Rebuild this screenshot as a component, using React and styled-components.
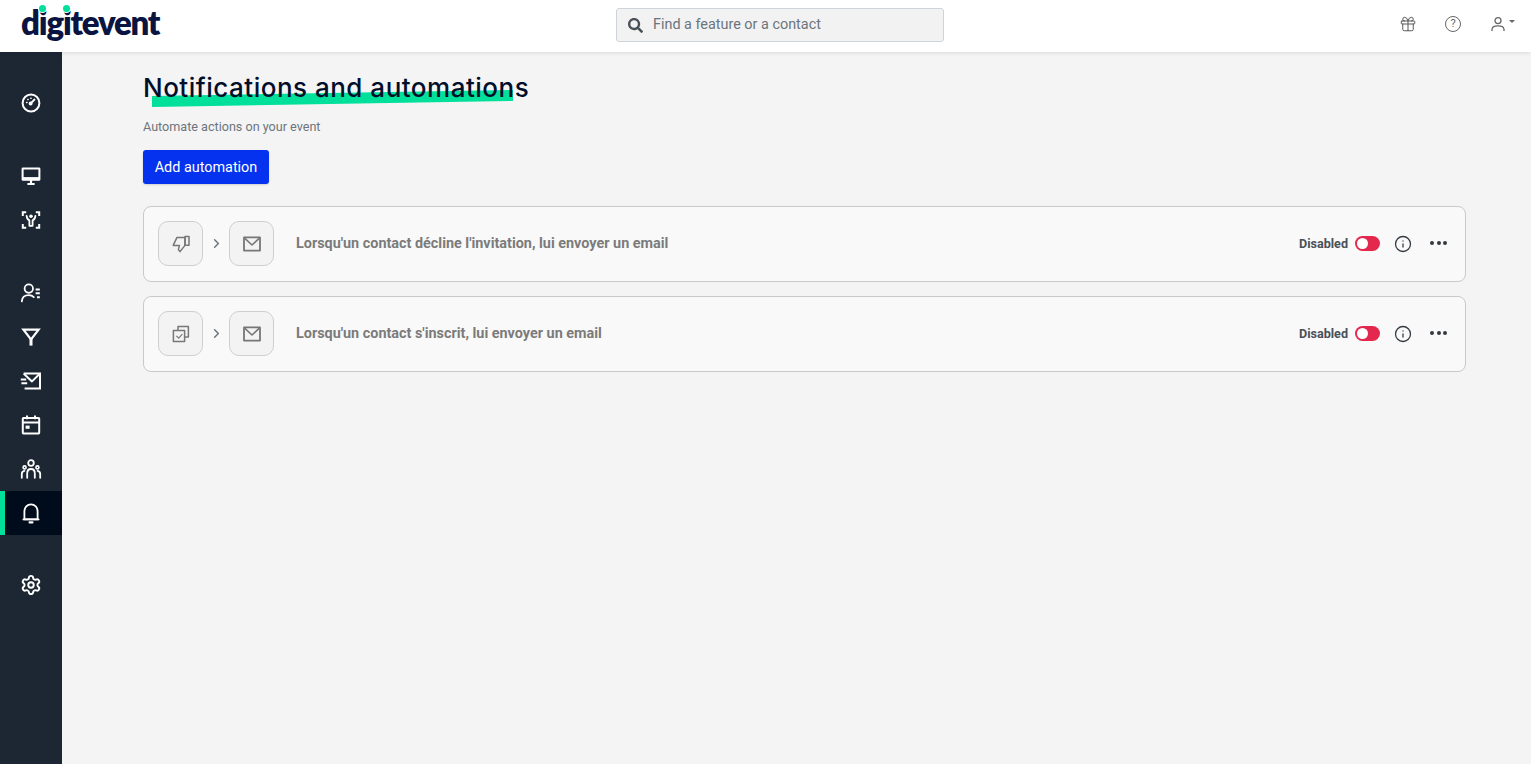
import React from "react";
import styled, { createGlobalStyle } from "styled-components";
import { ChevronRight, Gift, Info, Settings } from "lucide-react";
import { FaSearch } from "react-icons/fa";

const GlobalStyle = createGlobalStyle`
  * { box-sizing: border-box; }
  html, body { margin: 0; height: 100%; }
  body {
    font-family: Roboto, "Liberation Sans", sans-serif;
    background: #f4f4f4;
  }
`;

// sidebar icons, drawn on a 22x22 box
const Svg = ({ children }) => (
  <svg width="22" height="22" viewBox="0 0 22 22" fill="none" stroke="#fff" strokeWidth="2" strokeLinecap="round" strokeLinejoin="round">
    {children}
  </svg>
);

const GaugeIcon = () => (
  <Svg>
    <circle cx="11" cy="11" r="8.4" />
    <path d="M10.6 11.6 14.4 7.6" />
    <circle cx="10.6" cy="11.6" r="1" fill="#fff" />
    <path d="M6.6 10.6h.4M7.8 7.6h.3M10.8 6.2h.3" strokeWidth="1.5" />
  </Svg>
);
const MonitorIcon = () => (
  <Svg>
    <rect x="2.6" y="3.4" width="16.8" height="11.4" rx="0.4" strokeLinejoin="miter" />
    <path d="M3 13.6h16" strokeWidth="3" strokeLinecap="butt" />
    <path d="M11 15v3M7.4 19h7.2" strokeWidth="2.2" strokeLinecap="butt" />
  </Svg>
);
const PersonFrameIcon = () => (
  <Svg>
    <path d="M2.8 7V3.2h3.4M15.8 3.2h3.4V7M2.8 15v3.8h3.4M15.8 18.8h3.4V15" strokeLinecap="butt" strokeLinejoin="miter" />
    <circle cx="11" cy="7.2" r="1.8" fill="#fff" stroke="none" />
    <path d="M6.6 6.8c.4 2.8 1.4 4 2.8 4.6v5.4M15.4 6.8c-.4 2.8-1.4 4-2.8 4.6v5.4M9.4 16.8h3.2" strokeWidth="1.8" />
  </Svg>
);
const UserListIcon = () => (
  <Svg>
    <circle cx="8.8" cy="6.6" r="4.2" strokeWidth="1.8" />
    <path d="M1.8 19.4c.3-4 3.2-6.2 7-6.2 2 0 3.8.7 5 1.9" strokeWidth="1.8" />
    <path d="M15.6 7.4h4.2M15.6 11.2h4.2M17 15.2h2.8" strokeLinecap="butt" />
  </Svg>
);
const FilterIcon = () => (
  <Svg>
    <path d="M3.4 3.6h15.2L11 13.4z" strokeWidth="2.2" strokeLinejoin="miter" />
    <path d="M11 12v7.6" strokeWidth="3" strokeLinecap="butt" />
  </Svg>
);
const MailSendIcon = () => (
  <Svg>
    <path d="M3.6 3.6h16.4v15H4.6" strokeLinecap="butt" strokeLinejoin="miter" />
    <path d="M3.8 3.8 12 11.4 19.8 3.8" strokeLinecap="butt" />
    <path d="M.8 9.6h5.4M1.4 13.2h5.8" strokeLinecap="butt" />
  </Svg>
);
const CalendarIcon = () => (
  <Svg>
    <rect x="2.8" y="4" width="16.4" height="15.4" rx="0.6" />
    <path d="M2.8 8.6h16.4M7 1.6v3.6M15 1.6v3.6" strokeLinecap="butt" />
    <rect x="5.6" y="11.6" width="4" height="3.2" fill="#fff" stroke="none" />
  </Svg>
);
const TeamIcon = () => (
  <Svg>
    <circle cx="11" cy="5" r="2.8" strokeWidth="1.8" />
    <path d="M7.2 19.8v-4.4c0-2.6 1.5-4.4 3.8-4.4s3.8 1.8 3.8 4.4v4.4" strokeWidth="1.8" />
    <circle cx="4.6" cy="9.4" r="1.5" strokeWidth="1.6" />
    <circle cx="17.4" cy="9.4" r="1.5" strokeWidth="1.6" />
    <path d="M1.8 19.8v-3.8c0-1.8.9-3 2.6-3.2M20.2 19.8v-3.8c0-1.8-.9-3-2.6-3.2" strokeWidth="1.8" />
  </Svg>
);
const BellIcon = () => (
  <Svg>
    <path d="M4.4 17.4V9.6C4.4 5.4 7.2 2.4 11 2.4s6.6 3 6.6 7.2v7.8z" strokeWidth="1.8" />
    <path d="M3.4 17.4h15.2" strokeWidth="1.8" />
    <path d="M9.6 20.4h2.8" strokeWidth="2.2" />
  </Svg>
);
const GearIcon = () => <Settings size={22} color="#fff" strokeWidth={2.1} />;

// card icons, drawn on a 20x20 box
const TileSvg = ({ children }) => (
  <svg width="20" height="20" viewBox="0 0 20 20" fill="none" stroke="#777" strokeWidth="1.5" strokeLinejoin="round">
    {children}
  </svg>
);

const ThumbDownIcon = () => (
  <TileSvg>
    <path d="M14 3.4H6L2.2 11.4h6.2L7.4 15.6l1.6 2 5-6.2z" />
    <rect x="14" y="2.6" width="4" height="8.6" />
  </TileSvg>
);
const CheckedCopyIcon = () => (
  <TileSvg>
    <path d="M7 6.4V2.6h10.4V13h-3.6" />
    <rect x="2.4" y="6.4" width="11.2" height="11.2" />
    <path d="M5.4 11.8l2.3 2.3 3.6-4" strokeWidth="1.2" />
  </TileSvg>
);
const MailIcon = () => (
  <TileSvg>
    <rect x="2" y="3.4" width="16" height="13.2" strokeWidth="1.8" />
    <path d="M2.6 4.2 10 11l7.4-6.8" strokeWidth="1.6" />
  </TileSvg>
);

const navGroups = [
  [GaugeIcon],
  [MonitorIcon, PersonFrameIcon],
  [UserListIcon, FilterIcon, MailSendIcon, CalendarIcon, TeamIcon, BellIcon],
  [GearIcon],
];

const automations = [
  { id: 1, Trigger: ThumbDownIcon, label: "Lorsqu'un contact décline l'invitation, lui envoyer un email" },
  { id: 2, Trigger: CheckedCopyIcon, label: "Lorsqu'un contact s'inscrit, lui envoyer un email" },
];

function App() {
  return (
    <>
      <GlobalStyle />
      <Page>
        <TopBar>
          <Logo>
            d<LogoI>i</LogoI>g<LogoI>i</LogoI>tevent
          </Logo>
          <SearchBox>
            <FaSearch size={15} color="#495057" />
            <SearchText>Find a feature or a contact</SearchText>
          </SearchBox>
          <TopIcons>
            <Gift size={18} strokeWidth={1.3} />
            <HelpIcon>?</HelpIcon>
            <UserMenu>
              <svg width="16" height="16" viewBox="0 0 16 16" fill="none" stroke="#666" strokeWidth="1.3">
                <circle cx="8" cy="4.6" r="3" />
                <path d="M2 15v-1.4C2 11 4 9.8 8 9.8s6 1.2 6 3.8V15" />
              </svg>
              <Caret />
            </UserMenu>
          </TopIcons>
        </TopBar>
        <Body>
          <Sidebar>
            {navGroups.map((group, i) => (
              <NavGroup key={i}>
                {group.map((Icon, j) => (
                  <NavItem key={j} $active={Icon === BellIcon}>
                    <Icon />
                  </NavItem>
                ))}
              </NavGroup>
            ))}
          </Sidebar>
          <Content>
            <TitleWrap>
              <Stroke viewBox="0 0 361 18" preserveAspectRatio="none">
                <polygon points="0,7 361,1 361,12 0,18" fill="#00e09b" />
              </Stroke>
              <Title>Notifications and automations</Title>
            </TitleWrap>
            <Subtitle>Automate actions on your event</Subtitle>
            <AddButton>Add automation</AddButton>
            <CardList>
              {automations.map(({ id, Trigger, label }) => (
                <Card key={id}>
                  <IconTile>
                    <Trigger />
                  </IconTile>
                  <Arrow>
                    <ChevronRight size={15} strokeWidth={2.4} />
                  </Arrow>
                  <IconTile>
                    <MailIcon />
                  </IconTile>
                  <CardLabel>{label}</CardLabel>
                  <CardActions>
                    <Status>Disabled</Status>
                    <Toggle />
                    <InfoButton>
                      <Info size={18} strokeWidth={1.7} />
                    </InfoButton>
                    <Dots>
                      <i />
                      <i />
                      <i />
                    </Dots>
                  </CardActions>
                </Card>
              ))}
            </CardList>
          </Content>
        </Body>
      </Page>
    </>
  );
}

export default App;

const Page = styled.div`
  display: flex;
  flex-direction: column;
  height: 764px;
  overflow: hidden;
`;

const TopBar = styled.header`
  position: relative;
  z-index: 2;
  display: grid;
  grid-template-columns: 594px 328px 1fr;
  align-items: center;
  height: 52px;
  padding: 0 16px 2px 22px;
  background: #fff;
  box-shadow: 0 1px 4px rgba(0, 0, 0, 0.1);
`;

const Logo = styled.div`
  width: max-content;
  margin-top: -6px;
  margin-left: -1px;
  font-family: Lato, sans-serif;
  font-size: 33px;
  font-weight: 800;
  line-height: 36px;
  letter-spacing: -1.2px;
  color: #0a1441;
`;

const LogoI = styled.span`
  position: relative;

  &::after {
    content: "";
    position: absolute;
    top: 3px;
    left: 50%;
    width: 7px;
    height: 7px;
    margin-left: -4px;
    border-radius: 50%;
    background: #00e09b;
    box-shadow: 0 0 0 1px #fff;
  }
`;

const SearchBox = styled.div`
  display: flex;
  align-items: center;
  gap: 10px;
  height: 34px;
  padding-left: 11px;
  background: #f2f2f2;
  border: 1px solid #ced4da;
  border-radius: 3px;
`;

const SearchText = styled.span`
  padding-bottom: 1px;
  font-size: 14.4px;
  color: #6c757d;
`;

const TopIcons = styled.div`
  display: flex;
  align-items: center;
  justify-content: flex-end;
  gap: 28px;
  margin-top: -3px;
  color: #555;
`;

const HelpIcon = styled.span`
  display: flex;
  align-items: center;
  justify-content: center;
  width: 16px;
  height: 16px;
  font-size: 11px;
  color: #666;
  border: 1px solid #666;
  border-radius: 50%;
`;

const UserMenu = styled.div`
  display: flex;
  align-items: flex-start;
  gap: 3px;
  margin-left: 1px;
`;

const Caret = styled.span`
  margin-top: 4px;
  border: 3.5px solid transparent;
  border-top: 3.5px solid #666;
  border-bottom: 0;
`;

const Body = styled.div`
  display: flex;
  flex: 1;
`;

const Sidebar = styled.nav`
  display: flex;
  flex-direction: column;
  gap: 29px;
  flex: 0 0 62px;
  padding-top: 29px;
  background: #1c2733;

  & > :last-child {
    margin-top: -1px;
  }
`;

const NavGroup = styled.div`
  display: flex;
  flex-direction: column;
`;

const NavItem = styled.div`
  display: flex;
  align-items: center;
  justify-content: center;
  height: 44px;
  background: ${({ $active }) => ($active ? "#000c1c" : "transparent")};
  border-left: 5px solid ${({ $active }) => ($active ? "#00e09b" : "transparent")};
  padding-right: 5px;
`;

const Content = styled.main`
  flex: 1;
  padding: 20px 65px 0 81px;
`;

const TitleWrap = styled.div`
  position: relative;
  width: max-content;
`;

const Stroke = styled.svg`
  position: absolute;
  top: 17px;
  left: 9px;
  width: 361px;
  height: 18px;
`;

const Title = styled.h1`
  position: relative;
  margin: 0;
  font-family: Inter, sans-serif;
  font-size: 26px;
  font-weight: 500;
  line-height: 32px;
  letter-spacing: 0.5px;
  color: #020f2b;
`;

const Subtitle = styled.p`
  margin: 15px 0 0;
  font-size: 12.6px;
  line-height: 16px;
  color: #6c757d;
`;

const AddButton = styled.button`
  display: block;
  width: 126px;
  height: 34px;
  margin-top: 15px;
  padding: 0;
  font-family: inherit;
  font-size: 14.4px;
  color: #fff;
  background: #0432ef;
  border: 0;
  border-radius: 3px;
  box-shadow: 0 1px 2px rgba(0, 0, 0, 0.15);
`;

const CardList = styled.div`
  display: flex;
  flex-direction: column;
  gap: 14px;
  margin-top: 22px;
`;

const Card = styled.div`
  display: flex;
  align-items: center;
  height: 76px;
  padding: 0 14px 1px;
  background: #f9f9f9;
  border: 1px solid #c9c9c9;
  border-radius: 8px;
`;

const IconTile = styled.div`
  display: flex;
  align-items: center;
  justify-content: center;
  width: 45px;
  height: 45px;
  background: #f3f3f3;
  border: 1px solid #cfcfcf;
  border-radius: 10px;
`;

const Arrow = styled.div`
  display: flex;
  justify-content: center;
  width: 26px;
  color: #6c757d;
`;

const CardLabel = styled.div`
  margin-left: 22px;
  font-size: 14.4px;
  font-weight: 700;
  color: #7b7b7b;
`;

const CardActions = styled.div`
  display: flex;
  align-items: center;
  margin-left: auto;
  color: #343a40;
`;

const Status = styled.span`
  font-size: 12.6px;
  font-weight: 700;
  color: #495057;
`;

const Toggle = styled.span`
  position: relative;
  width: 25px;
  height: 15px;
  margin-left: 7px;
  background: #e4284d;
  border-radius: 8px;

  &::after {
    content: "";
    position: absolute;
    top: 2px;
    left: 2px;
    width: 11px;
    height: 11px;
    background: #fff;
    border-radius: 50%;
  }
`;

const InfoButton = styled.span`
  display: flex;
  margin-left: 14px;
`;

const Dots = styled.span`
  display: flex;
  gap: 2.5px;
  margin: 0 0 1px 18px;
  padding-right: 4px;

  i {
    width: 4px;
    height: 4px;
    background: #343a40;
    border-radius: 50%;
  }
`;
